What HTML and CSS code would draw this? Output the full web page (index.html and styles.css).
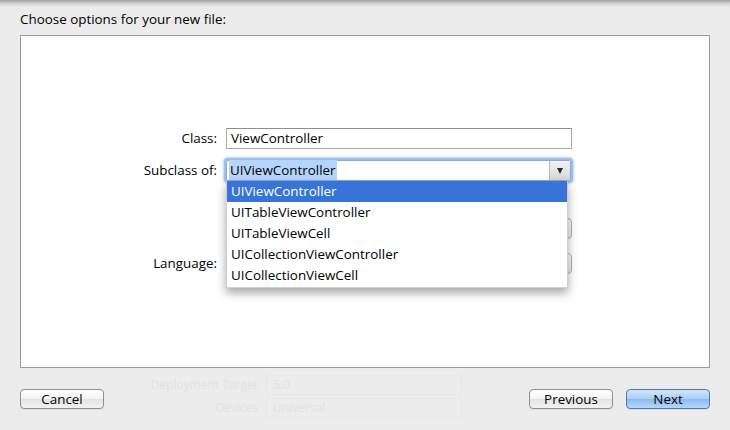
FILE: index.html
```html
<!DOCTYPE html>
<html>
<head>
<meta charset="utf-8">
<link rel="stylesheet" href="styles.css">
</head>
<body>
<div class="ghost" aria-hidden="true">
  <div class="ghost-form">
    <div class="ghost-label">Deployment Target</div>
    <div class="ghost-pop">5.0</div>
    <div class="ghost-label">Devices</div>
    <div class="ghost-pop">Universal</div>
  </div>
</div>
<div class="sheet">
  <div class="title">Choose options for your new file:</div>
  <div class="panel">
    <div class="form">
      <div class="row">
        <div class="label">Class:</div>
        <div class="textfield">ViewController</div>
      </div>
      <div class="row r2">
        <div class="label">Subclass of:</div>
        <div class="combo">
          <div class="combo-field"><span class="sel">UIViewController</span></div>
          <div class="combo-arrow"><span class="tri"></span></div>
          <div class="menu">
            <div class="item active">UIViewController</div>
            <div class="item">UITableViewController</div>
            <div class="item">UITableViewCell</div>
            <div class="item">UICollectionViewController</div>
            <div class="item">UICollectionViewCell</div>
          </div>
        </div>
      </div>
      <div class="row r3">
        <div class="label"></div>
        <div class="popup"></div>
      </div>
      <div class="row r4">
        <div class="label">Language:</div>
        <div class="popup"></div>
      </div>
    </div>
  </div>
  <div class="footer">
    <div class="btn cancel">Cancel</div>
    <div class="spacer"></div>
    <div class="btn">Previous</div>
    <div class="btn primary">Next</div>
  </div>
</div>
</body>
</html>
```
FILE: styles.css
```css
html, body {
  margin: 0;
  padding: 0;
}
body {
  width: 730px;
  height: 430px;
  overflow: hidden;
  background: #ececec;
  font-family: "Open Sans", "DejaVu Sans", sans-serif;
  font-size: 13.4px;
  color: #000;
  position: relative;
}
body::before {
  content: "";
  position: absolute;
  left: 0;
  top: 0;
  width: 100%;
  height: 8px;
  background: linear-gradient(to bottom, rgba(0,0,0,0.32), rgba(0,0,0,0.08) 50%, rgba(0,0,0,0));
  z-index: 5;
}
.ghost {
  position: absolute;
  inset: 0;
  color: #e2e2e2;
  font-size: 12px;
  z-index: 0;
}
.ghost-form {
  position: absolute;
  left: 140px;
  top: 375px;
  display: grid;
  grid-template-columns: 118px 196px;
  column-gap: 8px;
  row-gap: 3px;
}
.ghost-label {
  text-align: right;
  line-height: 20px;
}
.ghost-pop {
  height: 18px;
  line-height: 18px;
  border: 1px solid #e6e6e6;
  border-radius: 3px;
  padding-left: 6px;
}
.sheet {
  position: relative;
  z-index: 1;
  padding: 0 20px;
}
.title {
  height: 35px;
  box-sizing: border-box;
  padding-top: 11px;
  line-height: 17px;
}
.panel {
  height: 333px;
  box-sizing: border-box;
  background: #fff;
  border: 1px solid #9b9b9b;
  padding-top: 92px;
}
.form {
  display: flex;
  flex-direction: column;
}
.row {
  display: flex;
  gap: 9px;
  height: 21px;
}
.r2 { margin-top: 11px; }
.r3 { margin-top: 37px; }
.r4 { margin-top: 14px; }
.label {
  width: 196px;
  text-align: right;
  line-height: 21px;
}
.textfield {
  box-sizing: border-box;
  width: 346px;
  height: 21px;
  border: 1px solid #a9a9a9;
  border-top-color: #8e8e8e;
  line-height: 19px;
  padding-left: 4px;
}
.combo {
  position: relative;
  display: flex;
  height: 21px;
  width: 345px;
  box-sizing: border-box;
  border: 1px solid #8fa9cf;
  border-radius: 2px;
  box-shadow: 0 0 0 2px #9fc0ea, 0 0 2px 3px rgba(125,170,230,0.5);
  z-index: 3;
}
.combo-field {
  flex: 1;
  line-height: 19px;
  padding-left: 2px;
}
.sel {
  background: #b6d5fc;
  padding: 1px 1px;
}
.combo-arrow {
  width: 20px;
  border-left: 1px solid #b9b9b9;
  background: linear-gradient(to bottom, #f2f2f2, #d6d6d6);
  display: flex;
  align-items: center;
  justify-content: center;
}
.tri {
  width: 0;
  height: 0;
  border-left: 3.5px solid transparent;
  border-right: 3.5px solid transparent;
  border-top: 6px solid #2a2a2a;
}
.menu {
  position: absolute;
  left: -1px;
  top: 20px;
  width: 340px;
  background: #fff;
  border: 1px solid #cfcfcf;
  border-top: none;
  box-shadow: 0 5px 9px rgba(0,0,0,0.35);
  padding-bottom: 1px;
}
.item {
  height: 21px;
  line-height: 21px;
  padding-left: 4px;
}
.item.active {
  background: #3874d8;
  color: #fff;
}
.popup {
  box-sizing: border-box;
  height: 21px;
  width: 346px;
  border: 1px solid #b5b5b5;
  border-radius: 4px;
  background: linear-gradient(to bottom, #ffffff, #ececec);
}
.footer {
  display: flex;
  align-items: center;
  margin-top: 21px;
  gap: 13px;
}
.spacer { flex: 1; }
.btn {
  box-sizing: border-box;
  width: 84px;
  height: 20px;
  line-height: 18px;
  text-align: center;
  border: 1px solid #8f8f8f;
  border-radius: 4px;
  background: linear-gradient(to bottom, #ffffff, #f3f3f3 50%, #e3e3e3 51%, #f2f2f2);
  box-shadow: 0 1px 0 rgba(0,0,0,0.06);
}
.btn.primary {
  border-color: #5677a8;
  background: linear-gradient(to bottom, #d4e6fa, #a9cdf5 50%, #88bbef 51%, #b6d8fa);
}
```
